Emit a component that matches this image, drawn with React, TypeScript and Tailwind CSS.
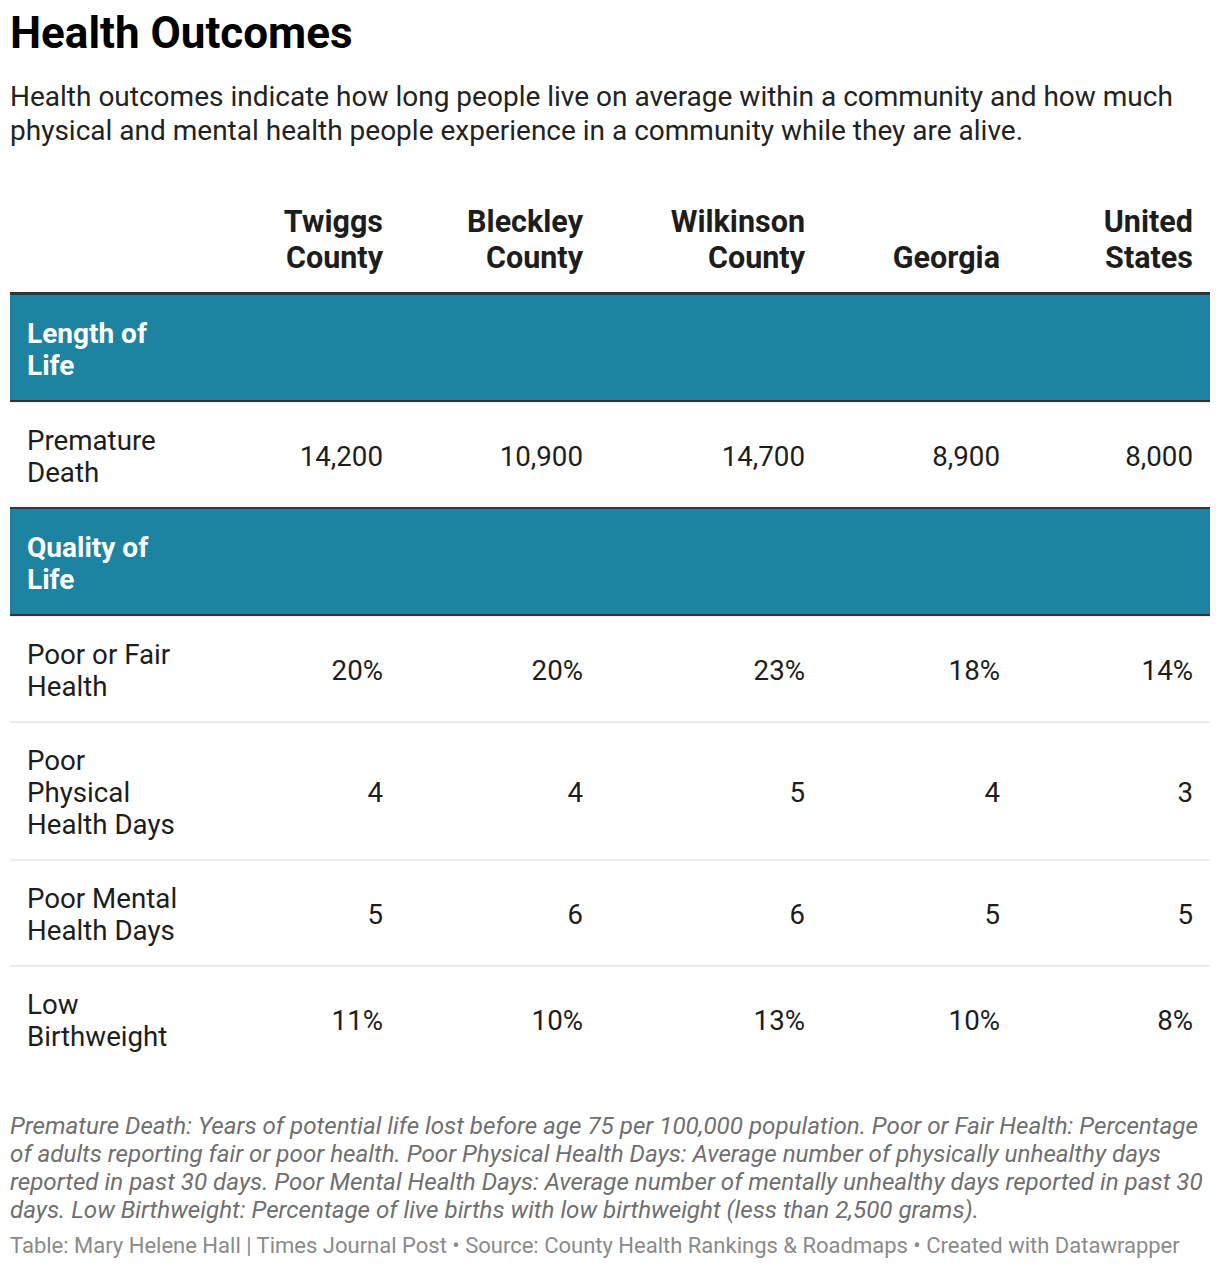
const cols = "grid grid-cols-[180px_210px_200px_222px_195px_193px]";

const headers = [
    ["Twiggs", "County"],
    ["Bleckley", "County"],
    ["Wilkinson", "County"],
    ["Georgia"],
    ["United", "States"],
];

const sections = [
    {
        title: ["Length of", "Life"],
        rows: [
            { label: ["Premature", "Death"], values: ["14,200", "10,900", "14,700", "8,900", "8,000"] },
        ],
    },
    {
        title: ["Quality of", "Life"],
        rows: [
            { label: ["Poor or Fair", "Health"], values: ["20%", "20%", "23%", "18%", "14%"] },
            { label: ["Poor", "Physical", "Health Days"], values: ["4", "4", "5", "4", "3"] },
            { label: ["Poor Mental", "Health Days"], values: ["5", "6", "6", "5", "5"] },
            { label: ["Low", "Birthweight"], values: ["11%", "10%", "13%", "10%", "8%"] },
        ],
    },
];

const notes = [
    "Premature Death: Years of potential life lost before age 75 per 100,000 population. Poor or Fair Health: Percentage",
    "of adults reporting fair or poor health. Poor Physical Health Days: Average number of physically unhealthy days",
    "reported in past 30 days. Poor Mental Health Days: Average number of mentally unhealthy days reported in past 30",
    "days. Low Birthweight: Percentage of live births with low birthweight (less than 2,500 grams).",
];

const Lines = ({ lines }: { lines: string[] }) => (
    <>
        {lines.map((l, i) => (
            <span key={i} className="block whitespace-nowrap">{l}</span>
        ))}
    </>
);

const App = () => {
    return (
        <div className="w-[1220px] bg-white px-[10px] pt-[6px] pb-4 text-[#1d1d1d] font-['Roboto',sans-serif]">
            <h1 className="text-[44px] font-bold leading-[54px] text-black">Health Outcomes</h1>
            <p className="mt-[20px] text-[28px] leading-[34px] text-[#222]">
                <Lines lines={[
                    "Health outcomes indicate how long people live on average within a community and how much",
                    "physical and mental health people experience in a community while they are alive.",
                ]} />
            </p>

            <div className="mt-[56px]">
                <div className={`${cols} border-b-[3px] border-[#333] pb-[16px]`}>
                    <div />
                    {headers.map((h, i) => (
                        <div key={i} className="flex flex-col justify-end pr-[17px] text-right text-[30.5px] font-bold leading-[36px] text-[#1d1d1d]">
                            <Lines lines={h} />
                        </div>
                    ))}
                </div>

                {sections.map((s, si) => (
                    <div key={si}>
                        <div className={`${si > 0 ? "border-t-2 border-[#333]" : ""} border-b-2 border-[#333] bg-[#1e82a1] pt-[23px] pb-[18px] pl-[17px] text-[28px] font-bold leading-[32px] text-white`}>
                            <Lines lines={s.title} />
                        </div>
                        {s.rows.map((r, ri) => (
                            <div key={ri} className={`${cols} ${ri < s.rows.length - 1 ? "border-b-2 border-[#ececec]" : ""} ${ri === 0 ? "border-t border-[#ececec]" : ""} pt-[22px] pb-[18px] text-[27.7px] leading-[32px]`}>
                                <div className="pl-[17px]">
                                    <Lines lines={r.label} />
                                </div>
                                {r.values.map((v, vi) => (
                                    <div key={vi} className="flex items-center justify-end pr-[17px] tabular-nums">{v}</div>
                                ))}
                            </div>
                        ))}
                    </div>
                ))}
            </div>

            <div className="mt-[41px] text-[24.2px] italic leading-[28px] text-[#6f6f6f]">
                <Lines lines={notes} />
            </div>
            <div className="mt-[8px] text-[22px] leading-[28px] text-[#8a8a8a]">
                Table: Mary Helene Hall | Times Journal Post • Source: County Health Rankings &amp; Roadmaps • Created with Datawrapper
            </div>
        </div>
    );
};

export default App;
